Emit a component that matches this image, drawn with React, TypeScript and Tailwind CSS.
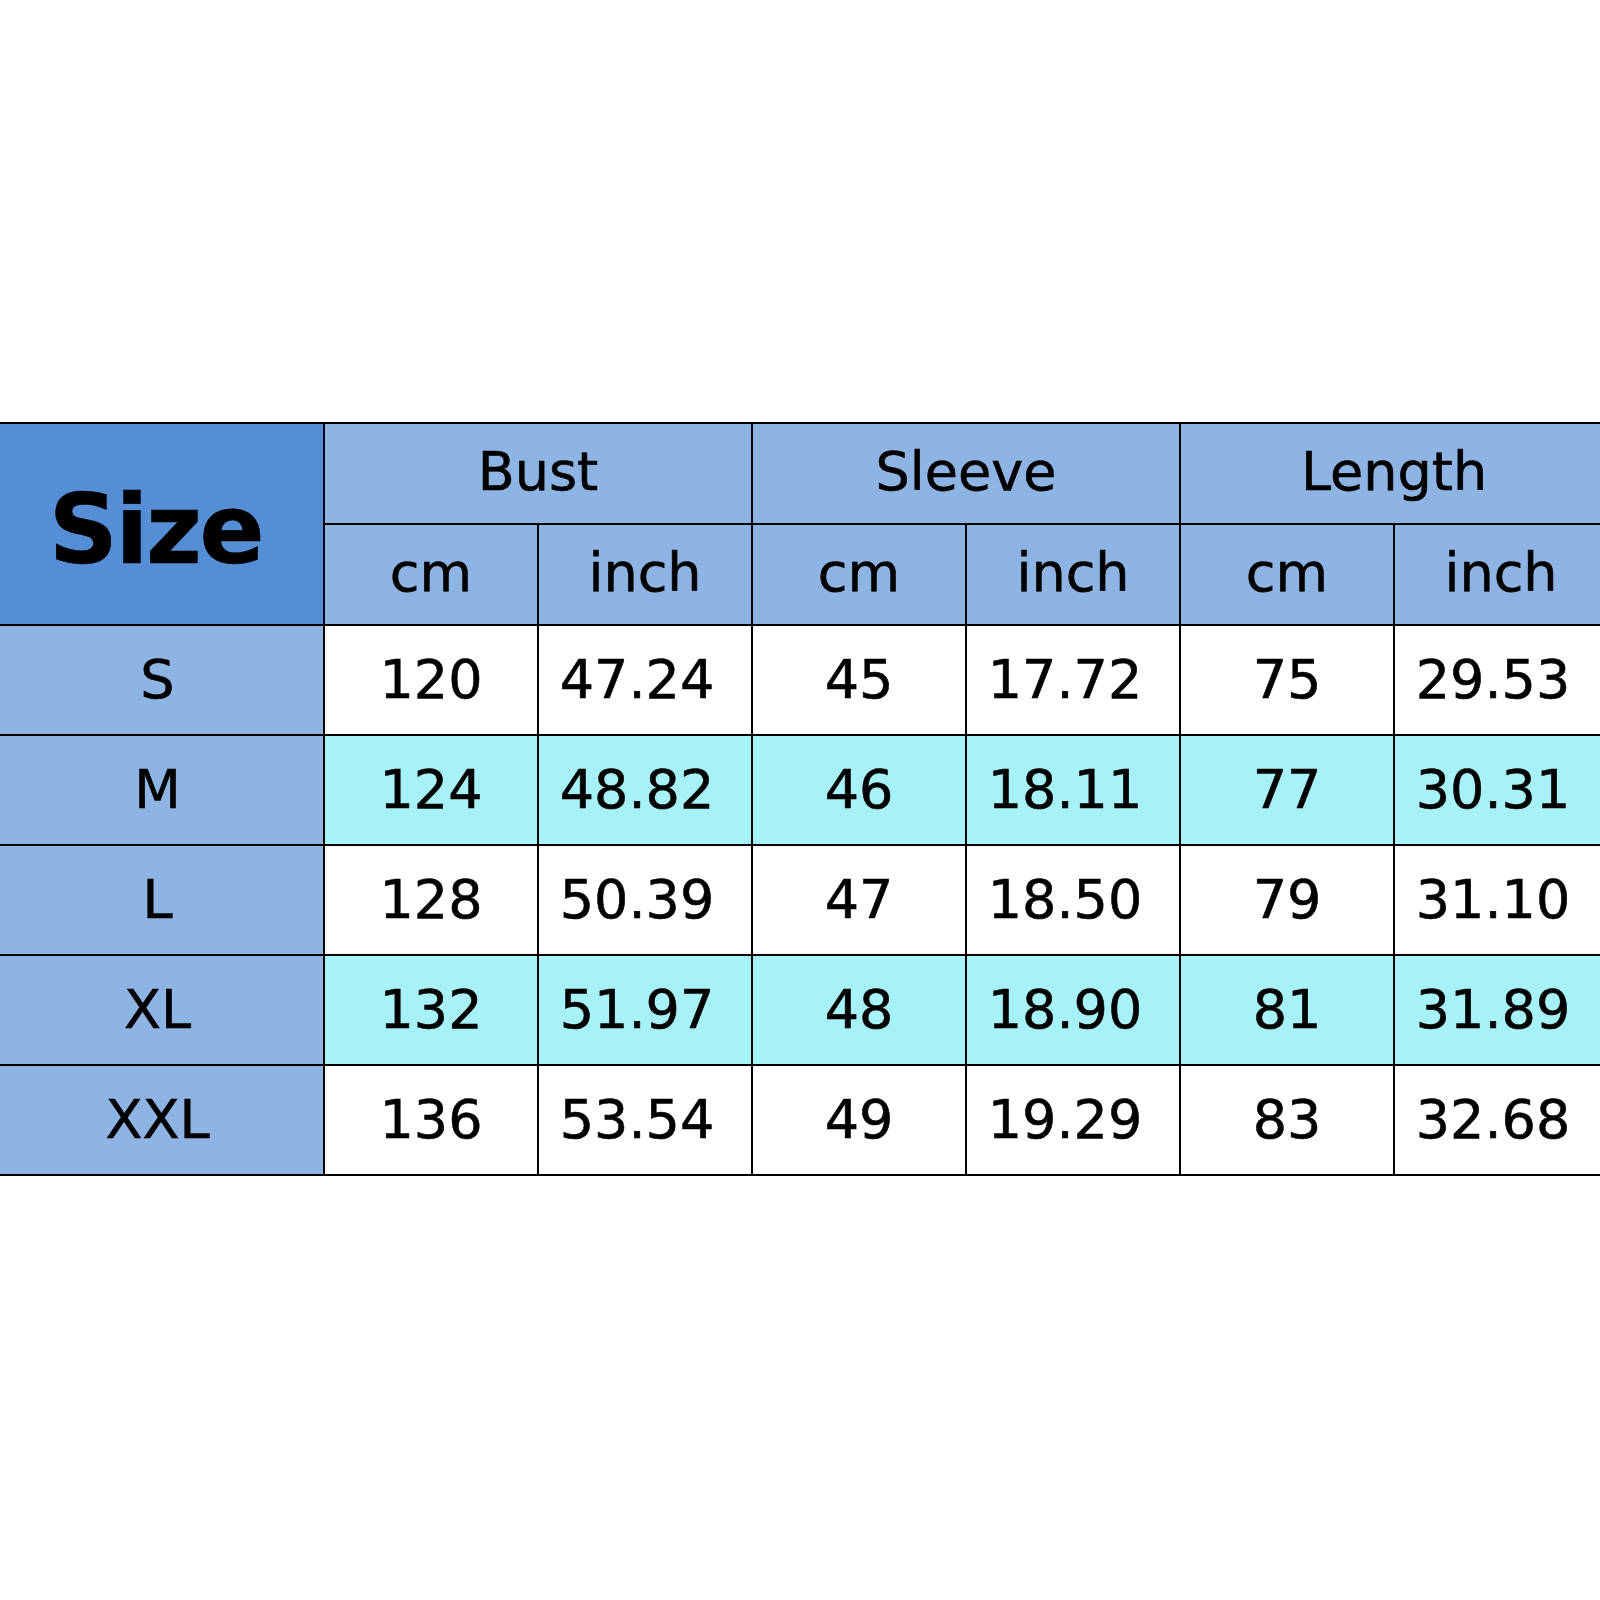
const rows = [
  { size: "S", v: ["120", "47.24", "45", "17.72", "75", "29.53"] },
  { size: "M", v: ["124", "48.82", "46", "18.11", "77", "30.31"] },
  { size: "L", v: ["128", "50.39", "47", "18.50", "79", "31.10"] },
  { size: "XL", v: ["132", "51.97", "48", "18.90", "81", "31.89"] },
  { size: "XXL", v: ["136", "53.54", "49", "19.29", "83", "32.68"] },
]

const groups = ["Bust", "Sleeve", "Length"]

export default function App() {
  return (
    <div className="w-[1600px] h-[1600px] bg-white overflow-hidden font-['DejaVu_Sans',sans-serif] text-black">
      <div className="pt-[422px] ml-[-2px]">
        <table className="table-fixed border-collapse w-[1611px] [-webkit-text-stroke:0.6px_black]">
          <colgroup>
            <col className="w-[325px]" />
            {[0, 1, 2, 3, 4, 5].map((i) => (
              <col key={i} className="w-[214px]" />
            ))}
          </colgroup>
          <thead>
            <tr className="h-[101px]">
              <th
                rowSpan={2}
                className="border-2 border-black bg-[#558ed5] text-[96px] font-bold tracking-tight leading-none pt-3 pr-3"
              >
                Size
              </th>
              {groups.map((g) => (
                <th
                  key={g}
                  colSpan={2}
                  className="border-2 border-black bg-[#8db4e2] text-[54px] font-normal leading-none pb-1"
                >
                  {g}
                </th>
              ))}
            </tr>
            <tr className="h-[101px]">
              {groups.flatMap((g) => [
                <th key={g + "cm"} className="border-2 border-black bg-[#8db4e2] text-[54px] font-normal leading-none pb-1">
                  cm
                </th>,
                <th key={g + "in"} className="border-2 border-black bg-[#8db4e2] text-[54px] font-normal leading-none pb-1">
                  inch
                </th>,
              ])}
            </tr>
          </thead>
          <tbody>
            {rows.map((r, idx) => (
              <tr key={r.size} className="h-[110px]">
                <td className="border-2 border-black bg-[#8db4e2] text-center text-[54px] leading-none pr-2">
                  {r.size}
                </td>
                {r.v.map((val, j) => (
                  <td
                    key={j}
                    className={`border-2 border-black text-center text-[54px] leading-none ${
                      j % 2 === 1 ? "pr-[16px]" : ""
                    } ${idx % 2 === 1 ? "bg-[#a7f1f9]" : "bg-white"}`}
                  >
                    {val}
                  </td>
                ))}
              </tr>
            ))}
          </tbody>
        </table>
      </div>
    </div>
  )
}
